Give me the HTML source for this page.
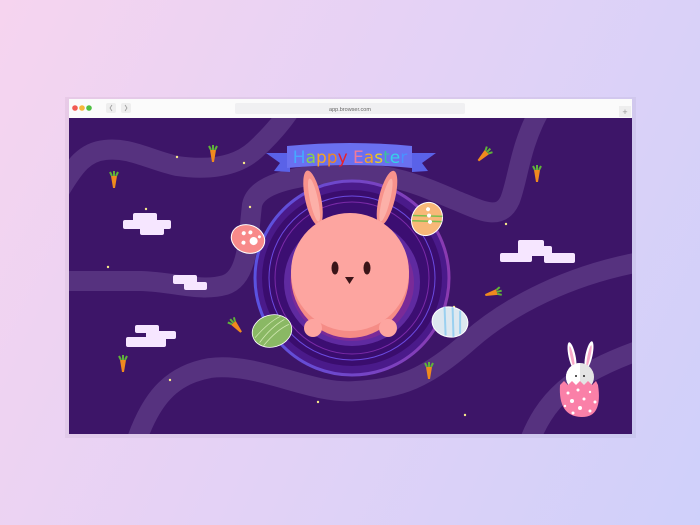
<!DOCTYPE html>
<html><head><meta charset="utf-8"><style>
html,body{margin:0;padding:0;width:700px;height:525px;overflow:hidden;font-family:"Liberation Sans",sans-serif}
body{background:linear-gradient(115deg,#f6d4ef 0%,#e3d2f6 50%,#cfd0fa 100%)}
</style></head><body>
<svg width="700" height="525" viewBox="0 0 700 525" xmlns="http://www.w3.org/2000/svg" style="position:absolute;left:0;top:0">
<defs>
<linearGradient id="ring" x1="0" y1="0" x2="1" y2="0"><stop offset="0" stop-color="#5a52e0"/><stop offset="1" stop-color="#8a3ab0"/></linearGradient>
<clipPath id="cc"><rect x="69" y="118" width="563" height="316"/></clipPath>
<g id="car"><path d="M-3,-4 L3,-4 L1,8 L-1,8Z" fill="#f08a1e"/><path d="M-2,-4 l-2,-4 M0,-4 l0,-5 M2,-4 l2,-4" stroke="#5fb33a" stroke-width="2"/></g>
</defs>
<rect x="65" y="97" width="571" height="341" fill="#000" opacity="0.04"/>
<rect x="69" y="99" width="563" height="19" fill="#fbfbfb"/>
<circle cx="75" cy="108" r="2.8" fill="#f25a52"/><circle cx="82" cy="108" r="2.8" fill="#f6b73a"/><circle cx="89" cy="108" r="2.8" fill="#4fc043"/>
<rect x="106" y="103" width="10" height="10" rx="2" fill="#eee"/><rect x="121" y="103" width="10" height="10" rx="2" fill="#eee"/>
<path d="M112,105 l-2,3 l2,3 M125,105 l2,3 l-2,3" stroke="#999" stroke-width="0.8" fill="none"/>
<rect x="235" y="103" width="230" height="11" rx="2" fill="#f0f0f2"/>
<text x="350" y="111" font-size="5.5" fill="#666" text-anchor="middle">app.browser.com</text>
<rect x="619" y="106" width="12" height="11" fill="#eee"/><text x="625" y="115" font-size="9" fill="#999" text-anchor="middle">+</text>
<g clip-path="url(#cc)">
<rect x="69" y="118" width="563" height="316" fill="#3d1568"/>
<g fill="none" stroke="#56327f" stroke-width="20" stroke-linejoin="round">
<path d="M60,190 C75,165 85,152 105,150 C130,147 150,160 177,166 C205,170 235,168 255,150 C268,138 280,125 290,110"/>
<path d="M60,281 L141,281 C175,282 200,292 225,285 C248,278 248,240 252,205 C256,185 290,176 340,173 C390,172 420,185 455,200 C480,210 500,222 510,200 C518,180 520,145 540,110"/>
<path d="M135,445 C150,400 170,375 210,368 C260,362 310,395 356,391 C400,388 425,380 470,340 C510,305 570,275 640,262"/>
<path d="M528,445 C545,400 570,375 640,350"/>
</g>
<g fill="#f6e6ff">
<rect x="133" y="213" width="24" height="9" rx="2"/><rect x="123" y="220" width="48" height="9" rx="2"/><rect x="140" y="227" width="24" height="8" rx="2"/>
<rect x="173" y="275" width="24" height="9" rx="2"/><rect x="184" y="282" width="23" height="8" rx="2"/>
<rect x="135" y="325" width="24" height="8" rx="2"/><rect x="146" y="331" width="30" height="8" rx="2"/><rect x="126" y="337" width="40" height="10" rx="2"/>
<rect x="518" y="240" width="26" height="9" rx="2"/><rect x="518" y="246" width="34" height="10" rx="2"/><rect x="500" y="253" width="32" height="9" rx="2"/><rect x="544" y="253" width="31" height="10" rx="2"/>
</g>
<g fill="#f7e98a">
<circle cx="177" cy="157" r="1.2"/><circle cx="244" cy="163" r="1.2"/><circle cx="146" cy="209" r="1.2"/><circle cx="250" cy="207" r="1.2"/><circle cx="108" cy="267" r="1.2"/><circle cx="170" cy="380" r="1.2"/><circle cx="318" cy="402" r="1.2"/><circle cx="465" cy="415" r="1.2"/><circle cx="454" cy="307" r="1.2"/><circle cx="506" cy="224" r="1.2"/>
</g>
<use href="#car" x="213" y="154"/><use href="#car" x="114" y="180"/><use href="#car" x="123" y="364"/><use href="#car" x="429" y="371"/><use href="#car" x="537" y="174"/>
<use href="#car" transform="translate(484,155) rotate(45)"/><use href="#car" transform="translate(493,293) rotate(75)"/><use href="#car" transform="translate(236,326) rotate(-40)"/>
<ellipse cx="352" cy="278" rx="97" ry="97" fill="#4a1a8a" stroke="url(#ring)" stroke-width="3"/>
<ellipse cx="352" cy="278" rx="90" ry="88" fill="#3a0d6e"/>
<ellipse cx="352" cy="278" rx="83" ry="82" fill="none" stroke="#6b4ae0" stroke-width="1"/>
<ellipse cx="352" cy="278" rx="77" ry="76" fill="#3c0e72" stroke="#7a2aa8" stroke-width="1"/>
<ellipse cx="352" cy="282" rx="68" ry="64" fill="#5f2aa0"/>
<ellipse cx="352" cy="283" rx="62" ry="58" fill="#7a2a98"/>
<ellipse cx="313" cy="198" rx="8" ry="28" transform="rotate(-12 313 198)" fill="#f8938c"/>
<ellipse cx="314" cy="200" rx="4" ry="22" transform="rotate(-12 314 200)" fill="#fcb0a8"/>
<ellipse cx="387" cy="198" rx="8" ry="28" transform="rotate(14 387 198)" fill="#f8938c"/>
<ellipse cx="386" cy="200" rx="4" ry="22" transform="rotate(14 386 200)" fill="#fcb0a8"/>
<ellipse cx="350" cy="276" rx="59" ry="62" fill="#f58c86"/>
<ellipse cx="350" cy="272" rx="59" ry="59" fill="#fda5a0"/>
<ellipse cx="335" cy="268" rx="3.5" ry="6.5" fill="#3a1418"/><ellipse cx="367" cy="268" rx="3.5" ry="6.5" fill="#3a1418"/>
<path d="M345,277 h9 l-4.5,7z" fill="#3a1418"/>
<circle cx="313" cy="328" r="9" fill="#fda5a0"/><circle cx="388" cy="328" r="9" fill="#fda5a0"/>
<path d="M266,153 L290,153 L290,172 L274,171 L280,163z" fill="#5a62e8"/>
<path d="M436,153 L412,153 L412,172 L428,171 L422,163z" fill="#5a62e8"/>
<path d="M287,146 Q350,140 412,146 L412,168 Q350,162 287,168z" fill="#6a70f0"/>
<text x="350" y="163" font-size="17" text-anchor="middle" font-family="DejaVu Sans, sans-serif"><tspan fill="#47a8ff">H</tspan><tspan fill="#8ad24a">a</tspan><tspan fill="#f5a623">p</tspan><tspan fill="#f28a1e">p</tspan><tspan fill="#e8202a">y</tspan> <tspan fill="#f07a9a">E</tspan><tspan fill="#f5a623">a</tspan><tspan fill="#e8d020">s</tspan><tspan fill="#3ac0a0">t</tspan><tspan fill="#35d2e8">e</tspan><tspan fill="#4a90ff">r</tspan></text>
<g transform="translate(248,239) rotate(20)"><ellipse rx="17" ry="14" fill="#f88a8a" stroke="#fff" stroke-width="1"/><circle cx="6" cy="0" r="4" fill="#fff"/><circle cx="-6" cy="-4" r="2" fill="#fff"/><circle cx="0" cy="-7" r="2" fill="#fff"/><circle cx="-3" cy="5" r="2" fill="#fff"/><circle cx="10" cy="-6" r="1.5" fill="#fff"/></g>
<g transform="translate(427,219) rotate(30)"><ellipse rx="15" ry="17" fill="#f8b878" stroke="#fff" stroke-width="1"/><path d="M-14,4 L12,-10 M-12,9 L14,-5" stroke="#7ac050" stroke-width="1.5"/><circle cx="0" cy="-4" r="2" fill="#fff"/><circle cx="4" cy="1" r="2" fill="#fff"/><circle cx="-4" cy="-9" r="2" fill="#fff"/></g>
<g transform="translate(272,331) rotate(-15)"><ellipse rx="20" ry="16" fill="#8ab864" stroke="#fff" stroke-width="0.8"/><path d="M-15,8 Q0,-4 15,-8 M-18,2 Q0,-10 12,-12 M-12,12 Q5,0 18,-2" stroke="#d0e8b0" stroke-width="0.8" fill="none"/></g>
<g transform="translate(450,322) rotate(10)"><ellipse rx="18" ry="15" fill="#dde8f0" stroke="#fff" stroke-width="1"/><path d="M-8,-14 L-2,14 M0,-15 L6,14 M8,-13 L12,10" stroke="#9ad0f0" stroke-width="2"/></g>
<ellipse cx="572" cy="356" rx="3.5" ry="14" transform="rotate(-12 572 356)" fill="#fff"/><ellipse cx="572" cy="357" rx="1.5" ry="11" transform="rotate(-12 572 357)" fill="#f8a8c8"/>
<ellipse cx="589" cy="355" rx="3.5" ry="14" transform="rotate(12 589 355)" fill="#fff"/><ellipse cx="589" cy="356" rx="1.5" ry="11" transform="rotate(12 589 356)" fill="#f8a8c8"/>
<circle cx="580" cy="377" r="14" fill="#e4e4e4"/><path d="M580,363 a14,14 0 0 0 0,28z" fill="#fff"/>
<circle cx="576" cy="376" r="1" fill="#222"/><circle cx="584" cy="376" r="1" fill="#222"/>
<path d="M560,385 l4,-4 l4,4 l4,-4 l4,4 l4,-4 l4,4 l4,-4 l4,4 l4,-4 l2,4 Q603,418 581,417 Q558,416 560,385z" fill="#fa80a8"/>
<g fill="#fff"><circle cx="568" cy="393" r="1.5"/><circle cx="578" cy="390" r="1.5"/><circle cx="590" cy="392" r="1.2"/><circle cx="572" cy="401" r="2"/><circle cx="584" cy="399" r="1.5"/><circle cx="595" cy="402" r="1.5"/><circle cx="565" cy="406" r="1.2"/><circle cx="580" cy="408" r="2"/><circle cx="590" cy="411" r="1.5"/><circle cx="573" cy="413" r="1.5"/></g>
</g>
</svg>
</body></html>
